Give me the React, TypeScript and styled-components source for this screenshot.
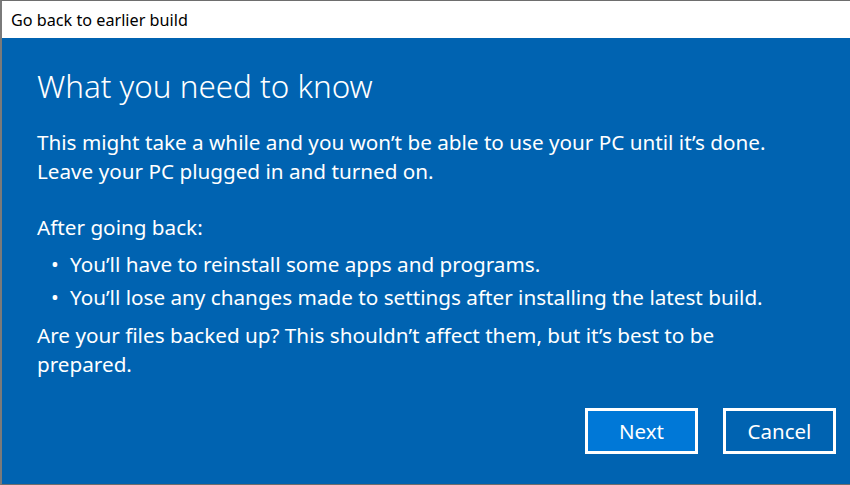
import * as React from 'react'
import styled, { createGlobalStyle } from 'styled-components'

const GlobalStyle = createGlobalStyle`
  html, body {
    margin: 0;
    padding: 0;
    background: #ffffff;
  }
  body {
    font-family: 'Noto Sans', 'Open Sans', sans-serif;
  }
`

const App = () => {
  return (
    <React.Fragment>
      <GlobalStyle />
      <Window>
        <TitleBar>Go back to earlier build</TitleBar>
        <Body>
          <Content>
            <Heading>What you need to know</Heading>
            <Paragraph>
              This might take a while and you won’t be able to use your PC until it’s done.
              <br />
              Leave your PC plugged in and turned on.
            </Paragraph>
            <Label>After going back:</Label>
            <BulletList>
              <Bullet>You’ll have to reinstall some apps and programs.</Bullet>
              <Bullet>You’ll lose any changes made to settings after installing the latest build.</Bullet>
            </BulletList>
            <Note>
              Are your files backed up? This shouldn’t affect them, but it’s best to be prepared.
            </Note>
          </Content>
          <Footer>
            <Button primary>Next</Button>
            <Button>Cancel</Button>
          </Footer>
        </Body>
      </Window>
    </React.Fragment>
  )
}

const Window = styled.div`
  width: 850px;
  height: 485px;
  box-sizing: border-box;
  border-top: 1px solid #6e6e6e;
  border-left: 2px solid #7a7a7a;
  border-bottom: 1px solid #6e6e6e;
  display: flex;
  flex-direction: column;
  overflow: hidden;
`

const TitleBar = styled.div`
  height: 37px;
  flex: none;
  display: flex;
  align-items: center;
  padding-left: 9px;
  background: #ffffff;
  color: #000000;
  font-size: 16.2px;
`

const Body = styled.div`
  flex: 1;
  background: #0063b1;
  color: #ffffff;
  display: flex;
  flex-direction: column;
  padding: 0 14px 0 35px;
`

const Content = styled.div`
  flex: 1;
  max-width: 755px;
`

const Heading = styled.h1`
  margin: 28px 0 0;
  font-size: 31.4px;
  font-weight: 300;
  line-height: 40px;
`

const Paragraph = styled.p`
  margin: 22px 0 0;
  font-size: 20.7px;
  line-height: 29px;
`

const Label = styled(Paragraph)`
  margin-top: 27px;
`

const BulletList = styled.ul`
  margin: 8px 0 0;
  padding: 0;
  list-style: none;
  display: flex;
  flex-direction: column;
  gap: 4px;
`

const Bullet = styled.li`
  position: relative;
  padding-left: 33px;
  font-size: 20.7px;
  line-height: 29px;

  &::before {
    content: '•';
    position: absolute;
    left: 14px;
  }
`

const Note = styled(Paragraph)`
  margin-top: 9px;
`

const Footer = styled.div`
  display: flex;
  justify-content: flex-end;
  gap: 25px;
  padding-bottom: 30px;
`

const Button = styled.button<{ primary?: boolean }>`
  width: 113px;
  height: 46px;
  box-sizing: border-box;
  border: 3px solid #ffffff;
  background: ${props => (props.primary ? '#0078d7' : 'transparent')};
  color: #ffffff;
  font-family: inherit;
  font-size: 20.5px;
  padding: 0;
`

export default App
